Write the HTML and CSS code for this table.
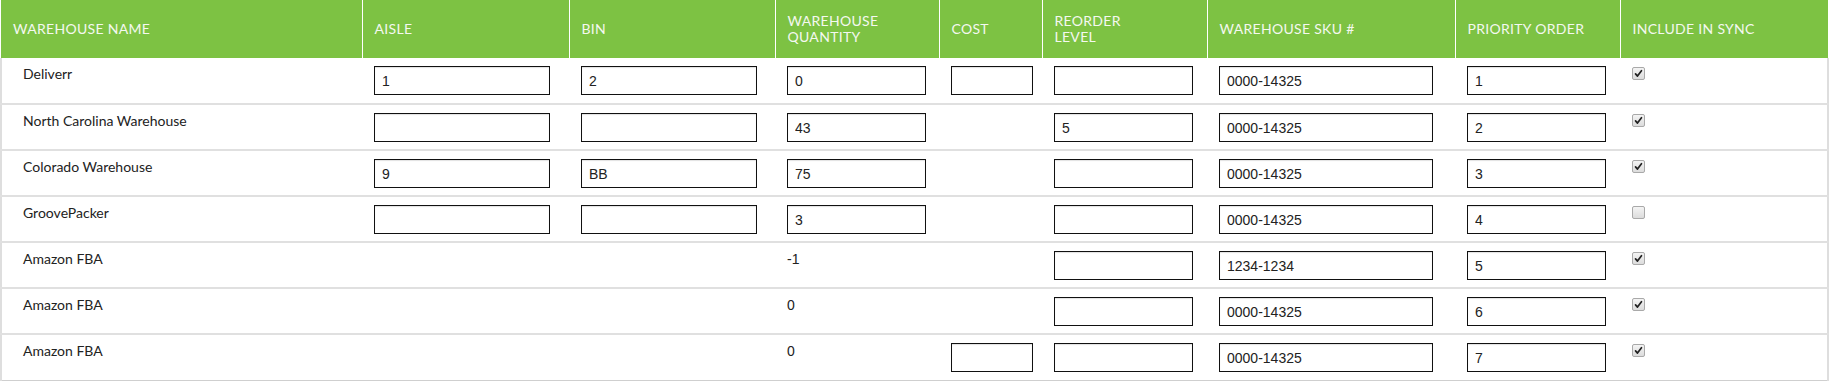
FILE: index.html
```html
<!DOCTYPE html>
<html>
<head>
<meta charset="utf-8">
<link rel="stylesheet" href="styles.css">
</head>
<body>
<table class="wh">
  <colgroup>
    <col class="c-name"><col class="c-aisle"><col class="c-bin"><col class="c-qty"><col class="c-cost"><col class="c-reorder"><col class="c-sku"><col class="c-prio"><col class="c-sync">
  </colgroup>
  <thead>
    <tr>
      <th>WAREHOUSE NAME</th>
      <th>AISLE</th>
      <th>BIN</th>
      <th>WAREHOUSE<br>QUANTITY</th>
      <th>COST</th>
      <th>REORDER<br>LEVEL</th>
      <th>WAREHOUSE SKU #</th>
      <th>PRIORITY ORDER</th>
      <th>INCLUDE IN SYNC</th>
    </tr>
  </thead>
  <tbody>
    <tr>
      <td class="name">Deliverr</td>
      <td><input class="in w-aisle" value="1"></td>
      <td><input class="in w-bin" value="2"></td>
      <td><input class="in w-qty" value="0"></td>
      <td><input class="in w-cost" value=""></td>
      <td><input class="in w-reorder" value=""></td>
      <td><input class="in w-sku" value="0000-14325"></td>
      <td><input class="in w-prio" value="1"></td>
      <td><span class="cb on"><svg viewBox="0 0 13 13"><path d="M3 7 L5.3 9.6 L10 3.2" /></svg></span></td>
    </tr>
    <tr>
      <td class="name">North Carolina Warehouse</td>
      <td><input class="in w-aisle" value=""></td>
      <td><input class="in w-bin" value=""></td>
      <td><input class="in w-qty" value="43"></td>
      <td></td>
      <td><input class="in w-reorder" value="5"></td>
      <td><input class="in w-sku" value="0000-14325"></td>
      <td><input class="in w-prio" value="2"></td>
      <td><span class="cb on"><svg viewBox="0 0 13 13"><path d="M3 7 L5.3 9.6 L10 3.2" /></svg></span></td>
    </tr>
    <tr>
      <td class="name">Colorado Warehouse</td>
      <td><input class="in w-aisle" value="9"></td>
      <td><input class="in w-bin" value="BB"></td>
      <td><input class="in w-qty" value="75"></td>
      <td></td>
      <td><input class="in w-reorder" value=""></td>
      <td><input class="in w-sku" value="0000-14325"></td>
      <td><input class="in w-prio" value="3"></td>
      <td><span class="cb on"><svg viewBox="0 0 13 13"><path d="M3 7 L5.3 9.6 L10 3.2" /></svg></span></td>
    </tr>
    <tr>
      <td class="name">GroovePacker</td>
      <td><input class="in w-aisle" value=""></td>
      <td><input class="in w-bin" value=""></td>
      <td><input class="in w-qty" value="3"></td>
      <td></td>
      <td><input class="in w-reorder" value=""></td>
      <td><input class="in w-sku" value="0000-14325"></td>
      <td><input class="in w-prio" value="4"></td>
      <td><span class="cb"></span></td>
    </tr>
    <tr>
      <td class="name">Amazon FBA</td>
      <td></td>
      <td></td>
      <td class="num">-1</td>
      <td></td>
      <td><input class="in w-reorder" value=""></td>
      <td><input class="in w-sku" value="1234-1234"></td>
      <td><input class="in w-prio" value="5"></td>
      <td><span class="cb on"><svg viewBox="0 0 13 13"><path d="M3 7 L5.3 9.6 L10 3.2" /></svg></span></td>
    </tr>
    <tr>
      <td class="name">Amazon FBA</td>
      <td></td>
      <td></td>
      <td class="num">0</td>
      <td></td>
      <td><input class="in w-reorder" value=""></td>
      <td><input class="in w-sku" value="0000-14325"></td>
      <td><input class="in w-prio" value="6"></td>
      <td><span class="cb on"><svg viewBox="0 0 13 13"><path d="M3 7 L5.3 9.6 L10 3.2" /></svg></span></td>
    </tr>
    <tr class="last">
      <td class="name">Amazon FBA</td>
      <td></td>
      <td></td>
      <td class="num">0</td>
      <td><input class="in w-cost" value=""></td>
      <td><input class="in w-reorder" value=""></td>
      <td><input class="in w-sku" value="0000-14325"></td>
      <td><input class="in w-prio" value="7"></td>
      <td><span class="cb on"><svg viewBox="0 0 13 13"><path d="M3 7 L5.3 9.6 L10 3.2" /></svg></span></td>
    </tr>
  </tbody>
</table>
</body>
</html>
```
FILE: styles.css
```css
html, body {
  margin: 0;
  padding: 0;
  background: #fff;
}
body {
  font-family: Lato, "Open Sans", sans-serif;
  color: #222;
}
.wh {
  width: 1827px;
  table-layout: fixed;
  border-collapse: collapse;
  border-spacing: 0;
}
.c-name { width: 361px; }
.c-aisle { width: 207px; }
.c-bin { width: 206px; }
.c-qty { width: 164px; }
.c-cost { width: 103px; }
.c-reorder { width: 165px; }
.c-sku { width: 248px; }
.c-prio { width: 165px; }
.c-sync { width: 208px; }

.wh thead th {
  background: #7dc243;
  color: #f4f8f0;
  font-weight: normal;
  font-size: 14px;
  letter-spacing: 0.3px;
  line-height: 16px;
  text-align: left;
  vertical-align: middle;
  height: 58px;
  padding: 0 0 0 12px;
  border-right: 1px solid #fff;
  box-sizing: border-box;
}
.wh thead th:last-child { border-right: none; }

.wh tbody td {
  height: 46px;
  box-sizing: border-box;
  padding: 8px 0 0 12px;
  vertical-align: top;
  border-bottom: 2px solid #e0e0e0;
  font-size: 14px;
  line-height: 20px;
}
.wh tbody td:first-child { border-left: 2px solid #dedede; }
.wh tbody td:last-child { border-right: 2px solid #dedede; }
.wh tbody tr.last td { border-bottom: 1px solid #cfcfcf; }
.wh tbody td.name { padding: 6px 0 0 21px; }
.wh tbody td.num { padding-top: 6px; font-family: "Liberation Sans", Arial, sans-serif; font-size: 14px; }

.in {
  display: block;
  box-sizing: border-box;
  height: 29px;
  margin: 0;
  padding: 0 7px;
  border: 1px solid #111;
  border-radius: 0;
  box-shadow: inset 0 1px 1px rgba(0,0,0,0.12);
  background: #fff;
  font-family: "Liberation Sans", Arial, sans-serif;
  font-size: 14px;
  color: #222;
  outline: none;
}
.w-aisle { width: 176px; }
.w-bin { width: 176px; }
.w-qty { width: 139px; }
.w-cost { width: 82px; }
.w-reorder { width: 139px; }
.w-sku { width: 214px; }
.w-prio { width: 139px; }

.cb {
  display: block;
  width: 13px;
  height: 13px;
  margin-top: 1px;
  box-sizing: border-box;
  border: 1px solid #a9a9a9;
  border-radius: 2px;
  background: linear-gradient(#f4f4f4, #dcdcdc);
}
.cb svg {
  display: block;
  width: 11px;
  height: 11px;
}
.cb svg path {
  fill: none;
  stroke: #222;
  stroke-width: 2;
  stroke-linecap: round;
  stroke-linejoin: round;
}
```
